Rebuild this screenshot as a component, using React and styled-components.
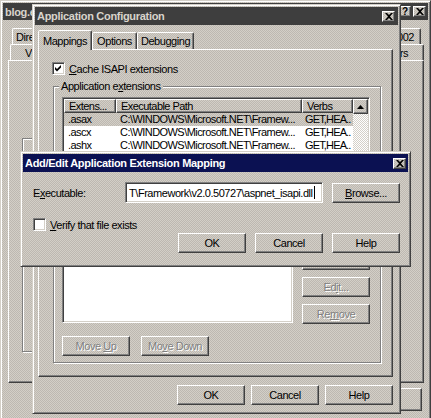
import React from "react";
import styled, { createGlobalStyle, css } from "styled-components";

const FACE = "#d4d0c8";

const dither = css`
  background: repeating-conic-gradient(#d3cfc7 0% 25%, #bdb8b1 0% 50%) 0 0 / 2px 2px;
`;

const raised = css`
  border: 1px solid;
  border-color: #fff #404040 #404040 #fff;
  box-shadow: inset -1px -1px #808080;
`;

const sunken = css`
  border: 1px solid;
  border-color: #808080 #fff #fff #808080;
  box-shadow: inset 1px 1px #404040, inset -1px -1px ${FACE};
`;

const GlobalStyle = createGlobalStyle`
  html, body { margin: 0; padding: 0; background: ${FACE}; }
`;

const Desktop = styled.div`
  position: relative;
  width: 431px;
  height: 418px;
  overflow: hidden;
  font-family: "Liberation Sans", Arial, sans-serif;
  font-size: 11px;
  letter-spacing: -0.45px;
  color: #000;
  ${dither}
`;

const Window = styled.div`
  position: absolute;
  left: ${(p) => p.$x}px;
  top: ${(p) => p.$y}px;
  width: ${(p) => p.$w}px;
  height: ${(p) => p.$h}px;
  box-sizing: border-box;
  border: 1px solid;
  border-color: ${FACE} #404040 #404040 ${FACE};
  box-shadow: inset 1px 1px #fff, inset -1px -1px #808080;
  padding: 2px;
  display: flex;
  flex-direction: column;
  ${dither}
`;

const TitleBar = styled.div`
  flex: none;
  height: ${(p) => p.$h || 18}px;
  display: flex;
  align-items: center;
  gap: 2px;
  padding: 0 ${(p) => p.$pr || 2}px 0 2px;
  background: ${(p) => (p.$active ? "#0b1152" : "#3e3e3e")};
  color: ${(p) => (p.$active ? "#fff" : "#d8d4cc")};
  font-weight: bold;
  letter-spacing: -0.3px;
`;

const TitleText = styled.span`
  flex: 1;
  white-space: nowrap;
  overflow: hidden;
`;

const CaptionButton = styled.div`
  box-sizing: border-box;
  width: ${(p) => p.$w || 13}px;
  height: 11px;
  display: flex;
  align-items: center;
  justify-content: center;
  color: #000;
  font-size: 10px;
  font-weight: bold;
  ${raised}
  ${dither}
`;

const CloseGlyph = () => (
  <svg width="8" height="7" viewBox="0 0 8 7">
    <path d="M0 0h2l2 2 2-2h2L5 3.5 8 7H6L4 5 2 7H0l3-3.5z" fill="#000" />
  </svg>
);

const Btn = styled.button`
  flex: none;
  box-sizing: border-box;
  width: ${(p) => p.$w || 68}px;
  height: ${(p) => p.$h || 20}px;
  padding: 0;
  font: inherit;
  letter-spacing: inherit;
  color: ${(p) => (p.disabled ? "#808080" : "#000")};
  text-shadow: ${(p) => (p.disabled ? "1px 1px #fff" : "none")};
  ${raised}
  ${dither}
`;

/* back window: blog properties */

const BackBody = styled.div`
  display: flex;
  flex-direction: column;
  padding: 8px 4px 0 5px;
`;

const BackTabRow = styled.div`
  display: flex;
  height: 16px;
  margin: 0 ${(p) => p.$r}px 0 ${(p) => p.$l}px;
`;

const BackTab = styled.div`
  flex: 1;
  box-sizing: border-box;
  border: 1px solid;
  border-bottom: none;
  border-color: #fff #404040 transparent #fff;
  box-shadow: inset -1px 0 #808080;
  border-radius: 2px 2px 0 0;
  display: flex;
  align-items: center;
  justify-content: ${(p) => (p.$end ? "flex-end" : "flex-start")};
  padding: 0 ${(p) => p.$pad || 3}px;
  white-space: nowrap;
  overflow: hidden;
`;

const BackPanel = styled.div`
  box-sizing: border-box;
  height: 323px;
  padding: 77px 0 0 13px;
  ${raised}
`;

const BackGroup = styled.div`
  box-sizing: border-box;
  width: 300px;
  height: 214px;
  border: 1px solid #808080;
  box-shadow: inset 1px 1px #fff, 1px 1px #fff;
`;

const BackButtons = styled.div`
  display: flex;
  justify-content: flex-end;
  gap: 6px;
  margin: 5px 2px 0 0;
`;

/* application configuration window */

const AppBody = styled.div`
  display: flex;
  flex-direction: column;
  padding: 5px 5px 0 3px;
`;

const TabStrip = styled.div`
  display: flex;
  align-items: flex-end;
  height: 19px;
  padding-left: 2px;
`;

const Tab = styled.div`
  position: relative;
  z-index: ${(p) => (p.$active ? 1 : 0)};
  box-sizing: border-box;
  width: ${(p) => p.$w}px;
  height: ${(p) => (p.$active ? 20 : 17)}px;
  margin-bottom: ${(p) => (p.$active ? -1 : 0)}px;
  margin-left: ${(p) => (p.$active ? -2 : 0)}px;
  border: 1px solid;
  border-bottom: none;
  border-color: #fff #404040 transparent #fff;
  box-shadow: inset -1px 0 #808080;
  border-radius: 2px 2px 0 0;
  display: flex;
  align-items: center;
  justify-content: center;
  ${dither}
`;

const TabPanel = styled.div`
  box-sizing: border-box;
  width: 355px;
  height: 328px;
  padding: 12px 0 0 13px;
  ${raised}
`;

const CheckRow = styled.label`
  display: flex;
  align-items: center;
  height: 13px;
  gap: 4px;
  white-space: nowrap;
`;

const CheckBox = styled.span`
  flex: none;
  box-sizing: border-box;
  width: 13px;
  height: 13px;
  background: #fff;
  display: flex;
  align-items: center;
  justify-content: center;
  ${sunken}
`;

const CheckGlyph = () => (
  <svg width="7" height="7" viewBox="0 0 7 7">
    <path d="M0 2l2 2 4-4v2.5L2 6.5 0 4.5z" fill="#000" />
  </svg>
);

const Group = styled.div`
  position: relative;
  box-sizing: border-box;
  width: 328px;
  height: ${(p) => p.$h}px;
  margin: ${(p) => p.$mt}px 0 0 1px;
  padding: ${(p) => p.$pt}px 10px 0 8px;
  border: 1px solid #808080;
  box-shadow: inset 1px 1px #fff, 1px 1px #fff;
`;

const GroupLabel = styled.span`
  position: absolute;
  top: -7px;
  left: 5px;
  padding: 0 2px;
  white-space: nowrap;
  line-height: 13px;
  ${dither}
`;

const ListView = styled.div`
  box-sizing: border-box;
  width: ${(p) => p.$w}px;
  height: ${(p) => p.$h}px;
  padding: 1px;
  display: flex;
  background: #fff;
  overflow: hidden;
  ${sunken}
`;

const ListTable = styled.div`
  flex: 1;
  display: flex;
  flex-direction: column;
  overflow: hidden;
  letter-spacing: -0.55px;
`;

const HeaderRow = styled.div`
  display: flex;
  height: 14px;
`;

const HeaderCell = styled.div`
  box-sizing: border-box;
  width: ${(p) => p.$w}px;
  flex: ${(p) => (p.$w ? "none" : 1)};
  padding-left: 4px;
  line-height: 12px;
  white-space: nowrap;
  overflow: hidden;
  ${raised}
  ${dither}
`;

const Row = styled.div`
  display: flex;
  height: 13px;
  line-height: 13px;
  ${(p) => p.$selected && dither}
`;

const Cell = styled.div`
  box-sizing: border-box;
  width: ${(p) => p.$w}px;
  flex: ${(p) => (p.$w ? "none" : 1)};
  padding-left: ${(p) => (p.$w ? 4 : 3)}px;
  letter-spacing: ${(p) => (p.$w ? "-0.55px" : "-0.85px")};
  white-space: nowrap;
  overflow: hidden;
`;

const ScrollBar = styled.div`
  flex: none;
  width: 15px;
  display: flex;
  flex-direction: column;
  background: repeating-conic-gradient(#fff 0% 25%, ${FACE} 0% 50%) 0 0 / 2px 2px;
`;

const ScrollArrow = styled.div`
  box-sizing: border-box;
  height: 15px;
  display: flex;
  align-items: center;
  justify-content: center;
  ${raised}
  ${dither}
`;

const ButtonRow = styled.div`
  display: flex;
  justify-content: ${(p) => (p.$start ? "flex-start" : "flex-end")};
  gap: ${(p) => p.$gap || 6}px;
  margin-top: ${(p) => p.$mt || 0}px;
`;

const WildcardArea = styled.div`
  display: flex;
  gap: 9px;
`;

const SideButtons = styled.div`
  display: flex;
  flex-direction: column;
  gap: 7px;
`;

/* add / edit dialog */

const DialogBody = styled.div`
  display: flex;
  flex-direction: column;
  padding: 10px 8px 0 10px;
`;

const FieldRow = styled.div`
  display: flex;
  align-items: center;
  height: 21px;
`;

const FieldLabel = styled.span`
  width: 92px;
`;

const TextField = styled.div`
  box-sizing: border-box;
  width: 198px;
  height: 21px;
  margin-right: 9px;
  padding: 0 3px;
  background: #fff;
  display: flex;
  align-items: center;
  white-space: nowrap;
  overflow: hidden;
  ${sunken}
`;

const Caret = styled.span`
  display: inline-block;
  width: 1px;
  height: 13px;
  margin-left: 1px;
  background: #000;
`;

const records = [
  { ext: ".asax", selected: true },
  { ext: ".ascx" },
  { ext: ".ashx" },
  { ext: ".asmx" },
  { ext: ".aspx" },
  { ext: ".axd" },
];

export default function App() {
  return (
    <Desktop>
      <GlobalStyle />

      <Window $x={0} $y={0} $w={431} $h={430}>
        <TitleBar $h={17}>
          <TitleText>blog.example.com Properties</TitleText>
          <CaptionButton $w={12}>?</CaptionButton>
          <CaptionButton $w={13}>
            <CloseGlyph />
          </CaptionButton>
        </TitleBar>
        <BackBody>
          <BackTabRow $l={4} $r={3}>
            <BackTab>Directory Security</BackTab>
            <BackTab>HTTP Headers</BackTab>
            <BackTab $end $pad={6}>Server Extensions 2002</BackTab>
          </BackTabRow>
          <BackTabRow $l={2} $r={0}>
            <BackTab $pad={14}>Virtual Directory</BackTab>
            <BackTab>Documents</BackTab>
            <BackTab $end $pad={15}>ISAPI Filters</BackTab>
          </BackTabRow>
          <BackPanel>
            <BackGroup />
          </BackPanel>
          <BackButtons>
            <Btn $w={75} $h={23}>OK</Btn>
            <Btn $w={75} $h={23}>Cancel</Btn>
            <Btn $w={75} $h={23}>Apply</Btn>
            <Btn $w={75} $h={23}>Help</Btn>
          </BackButtons>
        </BackBody>
      </Window>

      <Window $x={32} $y={4} $w={369} $h={410}>
        <TitleBar $pr={3}>
          <TitleText>Application Configuration</TitleText>
          <CaptionButton>
            <CloseGlyph />
          </CaptionButton>
        </TitleBar>
        <AppBody>
          <TabStrip>
            <Tab $w={54} $active>Mappings</Tab>
            <Tab $w={45}>Options</Tab>
            <Tab $w={57}>Debugging</Tab>
          </TabStrip>
          <TabPanel>
            <CheckRow>
              <CheckBox>
                <CheckGlyph />
              </CheckBox>
              <span>
                <u>C</u>ache ISAPI extensions
              </span>
            </CheckRow>

            <Group $h={139} $mt={11} $pt={10}>
              <GroupLabel>
                Application e<u>x</u>tensions
              </GroupLabel>
              <ListView $w={308} $h={96}>
                <ListTable>
                  <HeaderRow>
                    <HeaderCell $w={52}>Extens...</HeaderCell>
                    <HeaderCell $w={186}>Executable Path</HeaderCell>
                    <HeaderCell>Verbs</HeaderCell>
                  </HeaderRow>
                  {records.map((r) => (
                    <Row key={r.ext} $selected={r.selected}>
                      <Cell $w={52}>{r.ext}</Cell>
                      <Cell $w={186}>C:\WINDOWS\Microsoft.NET\Framew...</Cell>
                      <Cell>GET,HEA..</Cell>
                    </Row>
                  ))}
                </ListTable>
                <ScrollBar>
                  <ScrollArrow>
                    <svg width="7" height="4" viewBox="0 0 7 4">
                      <path d="M3.5 0L7 4H0z" fill="#000" />
                    </svg>
                  </ScrollArrow>
                </ScrollBar>
              </ListView>
              <ButtonRow $mt={5}>
                <Btn>A<u>d</u>d...</Btn>
                <Btn>E<u>d</u>it...</Btn>
                <Btn>Re<u>m</u>ove</Btn>
              </ButtonRow>
            </Group>

            <Group $h={130} $mt={8} $pt={16}>
              <GroupLabel>Wildcard application maps (order of implementation):</GroupLabel>
              <WildcardArea>
                <ListView $w={231} $h={73} />
                <SideButtons>
                  <Btn>I<u>n</u>sert...</Btn>
                  <Btn disabled>
                    Ed<u>i</u>t...
                  </Btn>
                  <Btn disabled>
                    Re<u>m</u>ove
                  </Btn>
                </SideButtons>
              </WildcardArea>
              <ButtonRow $start $gap={11} $mt={12}>
                <Btn disabled>
                  Move <u>U</u>p
                </Btn>
                <Btn disabled>
                  Mo<u>v</u>e Down
                </Btn>
              </ButtonRow>
            </Group>
          </TabPanel>
          <ButtonRow $mt={8}>
            <Btn>OK</Btn>
            <Btn>Cancel</Btn>
            <Btn>Help</Btn>
          </ButtonRow>
        </AppBody>
      </Window>

      <Window $x={20} $y={151} $w={391} $h={116}>
        <TitleBar $active>
          <TitleText>Add/Edit Application Extension Mapping</TitleText>
          <CaptionButton>
            <CloseGlyph />
          </CaptionButton>
        </TitleBar>
        <DialogBody>
          <FieldRow>
            <FieldLabel>
              E<u>x</u>ecutable:
            </FieldLabel>
            <TextField>
              T\Framework\v2.0.50727\aspnet_isapi.dll
              <Caret />
            </TextField>
            <Btn>
              <u>B</u>rowse...
            </Btn>
          </FieldRow>
          <CheckRow style={{ marginTop: 15 }}>
            <CheckBox />
            <span>
              <u>V</u>erify that file exists
            </span>
          </CheckRow>
          <ButtonRow $gap={9} $mt={2}>
            <Btn>OK</Btn>
            <Btn>Cancel</Btn>
            <Btn>Help</Btn>
          </ButtonRow>
        </DialogBody>
      </Window>
    </Desktop>
  );
}
